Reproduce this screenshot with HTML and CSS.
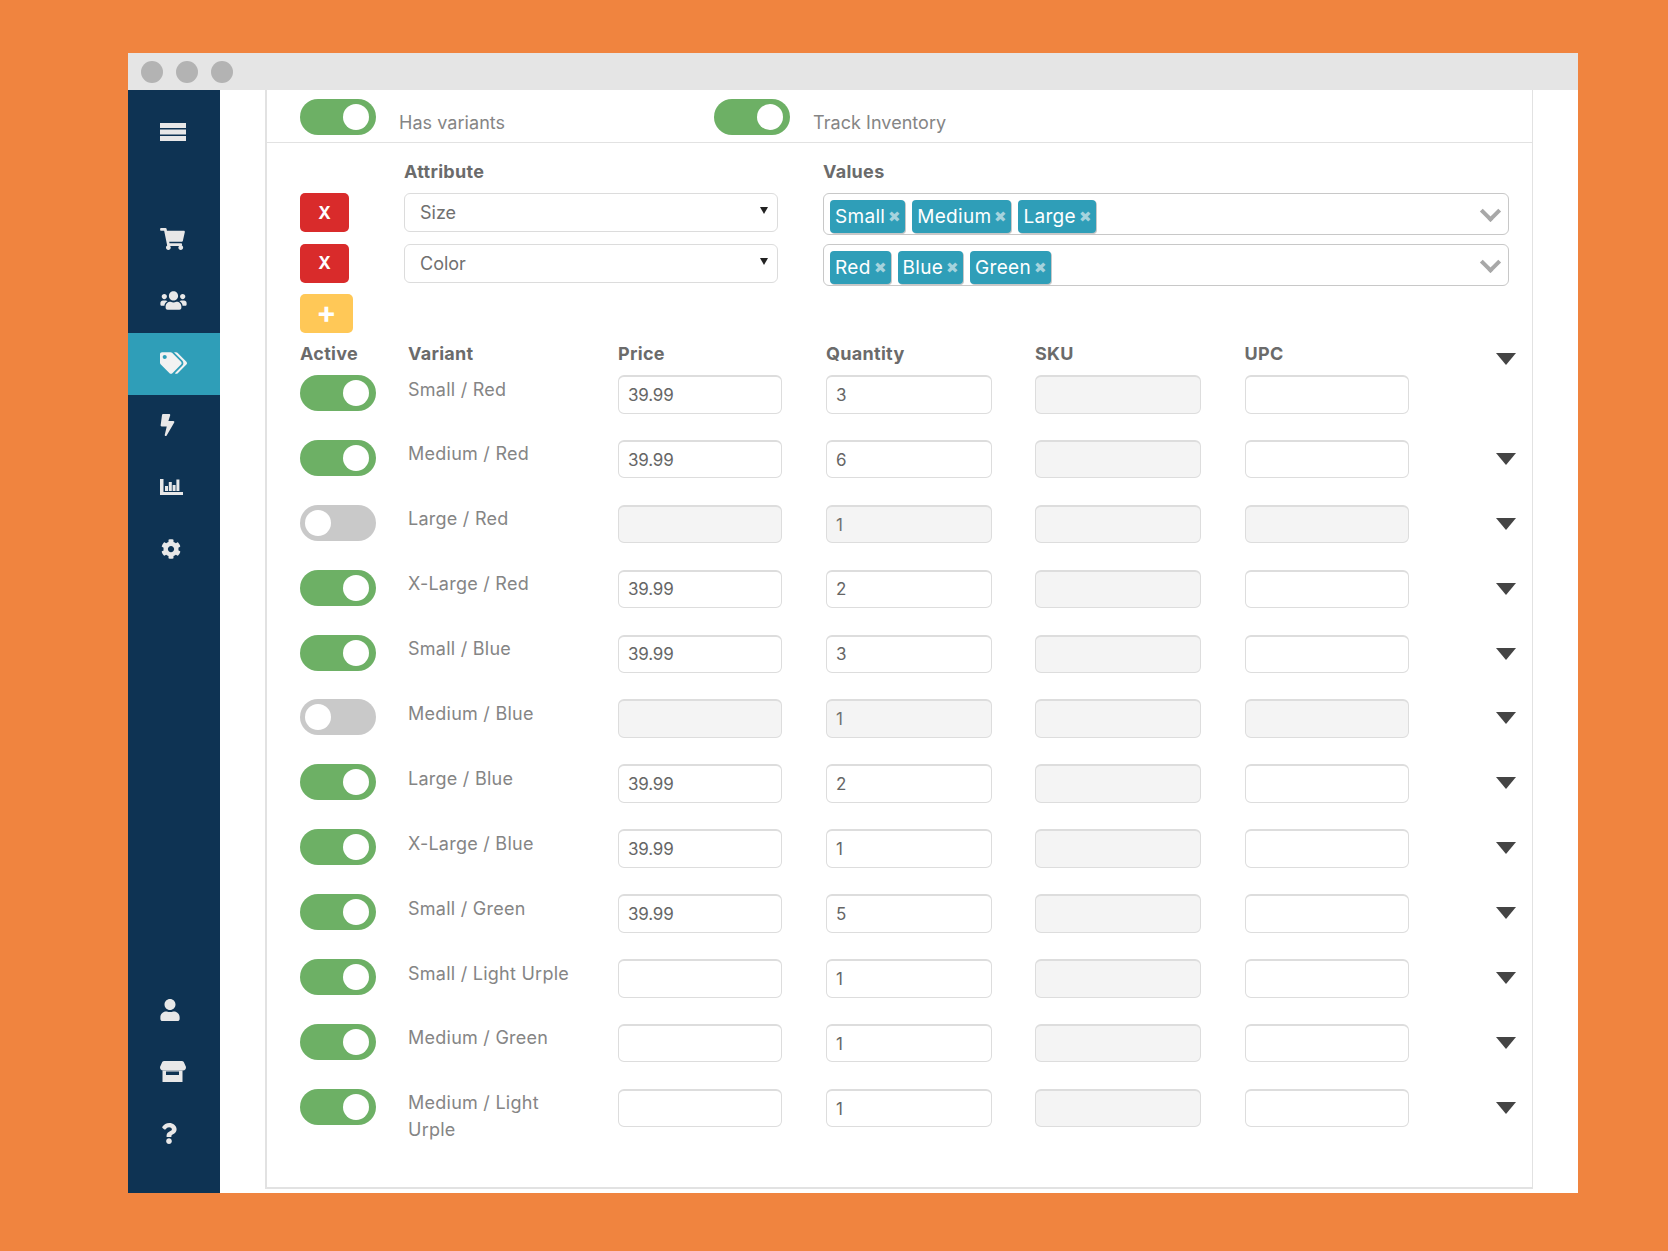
FILE: index.html
```html
<!DOCTYPE html>
<html lang="en">
<head>
<meta charset="utf-8">
<title>Product variants</title>
<link rel="stylesheet" href="styles.css">
</head>
<body>
<div class="window">
  <div class="titlebar"><i class="dot"></i><i class="dot"></i><i class="dot"></i></div>
  <div class="app">
    <nav class="sidebar">
      <div class="nav-item nav-menu"><svg class="icon i-menu" viewBox="0 0 26 18"><rect width="26" height="5"/><rect y="6.500" width="26" height="5"/><rect y="13" width="26" height="5"/></svg></div>
      <div class="nav-item nav-first"><svg class="icon i-cart" viewBox="0 0 576 512"><path d="M528.12 301.319l47.273-208C578.806 78.301 567.391 64 551.99 64H159.208l-9.166-44.81C147.758 8.021 137.93 0 126.529 0H24C10.745 0 0 10.745 0 24v16c0 13.255 10.745 24 24 24h69.883l70.248 343.435C147.325 417.1 136 435.222 136 456c0 30.928 25.072 56 56 56s56-25.072 56-56c0-15.674-6.447-29.835-16.824-40h209.647C430.447 426.165 424 440.326 424 456c0 30.928 25.072 56 56 56s56-25.072 56-56c0-22.172-12.888-41.332-31.579-50.405l5.517-24.276c3.413-15.018-8.002-29.319-23.403-29.319H218.117l-6.545-32h293.145c11.206 0 20.92-7.754 23.403-18.681z"/></svg></div>
      <div class="nav-item"><svg class="icon i-users" viewBox="0 0 640 512"><path d="M96 224c35.3 0 64-28.7 64-64s-28.7-64-64-64-64 28.7-64 64 28.7 64 64 64zm448 0c35.3 0 64-28.7 64-64s-28.7-64-64-64-64 28.7-64 64 28.7 64 64 64zm32 32h-64c-17.6 0-33.5 7.1-45.1 18.6 40.3 22.1 68.9 62 75.1 109.4h66c17.7 0 32-14.3 32-32v-32c0-35.3-28.7-64-64-64zm-256 0c61.9 0 112-50.1 112-112S381.9 32 320 32 208 82.1 208 144s50.1 112 112 112zm76.8 32h-8.3c-20.8 10-43.9 16-68.5 16s-47.6-6-68.5-16h-8.3C179.6 288 128 339.6 128 403.2V432c0 26.5 21.5 48 48 48h288c26.5 0 48-21.5 48-48v-28.8c0-63.6-51.6-115.2-115.2-115.2zm-223.7-13.4C161.5 263.1 145.6 256 128 256H64c-35.3 0-64 28.7-64 64v32c0 17.7 14.3 32 32 32h65.9c6.3-47.4 34.9-87.3 75.2-109.4z"/></svg></div>
      <div class="nav-item is-active"><svg class="icon i-tags" viewBox="0 0 640 512"><path d="M497.941 225.941L286.059 14.059A48 48 0 0 0 252.118 0H48C21.49 0 0 21.49 0 48v204.118a48 48 0 0 0 14.059 33.941l211.882 211.882c18.744 18.745 49.136 18.746 67.882 0l204.118-204.118c18.745-18.745 18.745-49.137 0-67.882zM112 160c-26.51 0-48-21.49-48-48s21.49-48 48-48 48 21.49 48 48-21.49 48-48 48zm513.941 133.823L421.823 497.941c-18.745 18.745-49.137 18.745-67.882 0l-.36-.36L527.64 323.522c16.999-16.999 26.36-39.6 26.36-63.64s-9.362-46.641-26.36-63.64L331.397 0h48.721a48 48 0 0 1 33.941 14.059l211.882 211.882c18.745 18.745 18.745 49.137 0 67.882z"/></svg></div>
      <div class="nav-item"><svg class="icon i-bolt" viewBox="0 0 320 512"><path d="M296 160H180.6l42.6-129.8C227.2 15 215.7 0 200 0H56C44 0 33.8 8.9 32.2 20.8l-32 240C-1.7 275.2 9.5 288 24 288h118.7L96.6 482.5c-3.6 15.2 8 29.5 23.3 29.5 8.4 0 16.4-4.4 20.8-12l176-304c9.3-15.9-2.2-36-20.7-36z"/></svg></div>
      <div class="nav-item"><svg class="icon i-chart" viewBox="0 0 23 16"><path d="M0 0h3.500v13H23v3H0z"/><rect x="5" y="7" width="3" height="5"/><rect x="8.800" y="3" width="3" height="9"/><rect x="12.600" y="6" width="3" height="6"/><rect x="16.400" y="0.500" width="3" height="11.500"/></svg></div>
      <div class="nav-item"><svg class="icon i-cog" viewBox="0 0 512 512"><path d="M487.4 315.7l-42.6-24.6c4.3-23.2 4.3-47 0-70.2l42.6-24.6c4.9-2.8 7.1-8.6 5.5-14-11.1-35.6-30-67.8-54.7-94.6-3.8-4.1-10-5.1-14.8-2.3L380.8 110c-17.9-15.4-38.5-27.3-60.8-35.1V25.8c0-5.6-3.9-10.5-9.4-11.7-36.7-8.2-74.3-7.8-109.2 0-5.5 1.2-9.4 6.1-9.4 11.7V75c-22.2 7.9-42.8 19.8-60.8 35.1L88.7 85.5c-4.9-2.8-11-1.9-14.8 2.3-24.7 26.7-43.6 58.9-54.7 94.6-1.7 5.4.6 11.2 5.5 14L67.3 221c-4.3 23.2-4.3 47 0 70.2l-42.6 24.6c-4.9 2.8-7.1 8.6-5.5 14 11.1 35.6 30 67.8 54.7 94.6 3.8 4.1 10 5.1 14.8 2.3l42.6-24.6c17.9 15.4 38.5 27.3 60.8 35.1v49.2c0 5.6 3.9 10.5 9.4 11.7 36.7 8.2 74.3 7.8 109.2 0 5.5-1.2 9.4-6.1 9.4-11.7v-49.2c22.2-7.9 42.8-19.8 60.8-35.1l42.6 24.6c4.9 2.8 11 1.9 14.8-2.3 24.7-26.7 43.6-58.9 54.7-94.6 1.5-5.5-.7-11.3-5.6-14.1zM256 336c-44.1 0-80-35.9-80-80s35.9-80 80-80 80 35.9 80 80-35.9 80-80 80z"/></svg></div>
      <div class="nav-spacer"></div>
      <div class="nav-item"><svg class="icon i-user" viewBox="0 0 448 512"><path d="M224 256c70.7 0 128-57.3 128-128S294.7 0 224 0 96 57.3 96 128s57.3 128 128 128zm89.6 32h-16.7c-22.2 10.2-46.9 16-72.9 16s-50.6-5.800-72.9-16h-16.700C60.200 288 0 348.200 0 422.400V464c0 26.500 21.500 48 48 48h352c26.500 0 48-21.500 48-48v-41.600c0-74.200-60.200-134.400-134.400-134.400z"/></svg></div>
      <div class="nav-item"><svg class="icon i-store" viewBox="0 0 26 21"><path d="M4 0h18c1 0 1.800.800 2 1.500L26 6c0 2-1 3.500-3 3.500H3C1 9.500 0 8 0 6l2-4.500C2.200.800 3 0 4 0z"/><path fill-rule="evenodd" d="M2.500 9.500h20V21h-20zM6 10.500V14h13v-3.500z"/></svg></div>
      <div class="nav-item"><svg class="icon i-help" viewBox="0 0 384 512"><path d="M202.021 0C122.202 0 70.503 32.703 29.914 91.026c-7.363 10.58-5.093 25.086 5.178 32.874l43.138 32.709c10.373 7.865 25.132 6.026 33.253-4.148 25.049-31.381 43.63-49.449 82.757-49.449 30.764 0 68.816 19.799 68.816 49.631 0 22.552-18.617 34.134-48.993 51.164-35.423 19.86-82.299 44.576-82.299 106.405V320c0 13.255 10.745 24 24 24h72.471c13.255 0 24-10.745 24-24v-5.773c0-42.86 125.268-44.645 125.268-160.627C377.504 66.256 286.902 0 202.021 0zM192 373.459c-38.196 0-69.271 31.075-69.271 69.271 0 38.195 31.075 69.27 69.271 69.27s69.271-31.075 69.271-69.271-31.075-69.27-69.271-69.27z"/></svg></div>
    </nav>
    <main class="main">
      <section class="panel">
        <header class="panel-head">
          <div class="head-item"><span class="toggle on"></span><span class="head-label">Has variants</span></div>
          <div class="head-item"><span class="toggle on"></span><span class="head-label">Track Inventory</span></div>
        </header>
        <div class="attrs">
          <span></span><span class="col-title">Attribute</span><span class="col-title col-values">Values</span>
          <button class="btn btn-del">X</button>
          <div class="select">Size</div>
          <div class="multi"><span class="tag">Small<b>✖</b></span><span class="tag">Medium<b>✖</b></span><span class="tag">Large<b>✖</b></span><i class="chev"></i></div>
          <button class="btn btn-del">X</button>
          <div class="select">Color</div>
          <div class="multi"><span class="tag">Red<b>✖</b></span><span class="tag">Blue<b>✖</b></span><span class="tag">Green<b>✖</b></span><i class="chev"></i></div>
          <button class="btn btn-add">+</button>
        </div>
        <div class="variants">
          <span class="col-title">Active</span><span class="col-title">Variant</span><span class="col-title">Price</span><span class="col-title">Quantity</span><span class="col-title">SKU</span><span class="col-title">UPC</span><i class="caret"></i>

          <span class="toggle on"></span><span class="vname">Small / Red</span><input class="field" value="39.99"><input class="field" value="3"><input class="field" disabled><input class="field"><span></span>
          <span class="toggle on"></span><span class="vname">Medium / Red</span><input class="field" value="39.99"><input class="field" value="6"><input class="field" disabled><input class="field"><i class="caret"></i>
          <span class="toggle"></span><span class="vname">Large / Red</span><input class="field" disabled><input class="field" value="1" disabled><input class="field" disabled><input class="field" disabled><i class="caret"></i>
          <span class="toggle on"></span><span class="vname">X-Large / Red</span><input class="field" value="39.99"><input class="field" value="2"><input class="field" disabled><input class="field"><i class="caret"></i>
          <span class="toggle on"></span><span class="vname">Small / Blue</span><input class="field" value="39.99"><input class="field" value="3"><input class="field" disabled><input class="field"><i class="caret"></i>
          <span class="toggle"></span><span class="vname">Medium / Blue</span><input class="field" disabled><input class="field" value="1" disabled><input class="field" disabled><input class="field" disabled><i class="caret"></i>
          <span class="toggle on"></span><span class="vname">Large / Blue</span><input class="field" value="39.99"><input class="field" value="2"><input class="field" disabled><input class="field"><i class="caret"></i>
          <span class="toggle on"></span><span class="vname">X-Large / Blue</span><input class="field" value="39.99"><input class="field" value="1"><input class="field" disabled><input class="field"><i class="caret"></i>
          <span class="toggle on"></span><span class="vname">Small / Green</span><input class="field" value="39.99"><input class="field" value="5"><input class="field" disabled><input class="field"><i class="caret"></i>
          <span class="toggle on"></span><span class="vname">Small / Light Urple</span><input class="field"><input class="field" value="1"><input class="field" disabled><input class="field"><i class="caret"></i>
          <span class="toggle on"></span><span class="vname">Medium / Green</span><input class="field"><input class="field" value="1"><input class="field" disabled><input class="field"><i class="caret"></i>
          <span class="toggle on"></span><span class="vname">Medium / Light Urple</span><input class="field"><input class="field" value="1"><input class="field" disabled><input class="field"><i class="caret"></i>
        </div>
      </section>
    </main>
  </div>
</div>
</body>
</html>
```
FILE: styles.css
```css
* { box-sizing: border-box; }
html, body { margin: 0; height: 100%; }
body {
  background: #f0843f;
  font-family: Inter, "Open Sans", sans-serif;
  font-size: 18px;
  color: #858585;
  overflow: hidden;
}
.window {
  width: 1450px;
  height: 1140px;
  margin: 53px 0 0 128px;
  background: #fff;
  display: flex;
  flex-direction: column;
}
.titlebar {
  height: 37px;
  background: #e5e5e5;
  display: flex;
  align-items: center;
  gap: 13px;
  padding-left: 13px;
  flex: none;
}
.dot { width: 22px; height: 22px; border-radius: 50%; background: #b3b3b3; }
.app { flex: 1; display: flex; min-height: 0; }

.sidebar {
  width: 92px;
  flex: none;
  background: #0e3353;
  display: flex;
  flex-direction: column;
  padding: 11px 0 27px;
}
.nav-item {
  height: 62px;
  flex: none;
  display: flex;
  align-items: center;
  padding: 0 0 3px 32px;
}
.nav-menu { padding-bottom: 0; }
.nav-first { margin-top: 46px; }
.nav-spacer { flex: 1; }
.is-active { background: #2f9eb8; }
.icon { fill: #e8e8e8; display: block; }
.i-menu { width: 26px; height: 18px; }
.i-cart { width: 25px; height: 22px; }
.i-users { width: 27px; height: 21px; }
.i-tags { width: 27px; height: 22px; fill: #f2f2f2; }
.i-bolt { width: 15px; height: 22px; }
.i-chart { width: 23px; height: 16px; }
.i-cog { width: 20px; height: 20px; margin-left: 1px; }
.i-user { width: 20px; height: 22px; }
.i-store { width: 26px; height: 21px; }
.i-help { width: 16px; height: 21px; margin-left: 1px; }

.main { flex: 1; padding: 0 45px 4px; min-width: 0; }
.panel {
  height: 100%;
  border: solid #e2e2e2;
  border-width: 0 1px 2px 2px;
  padding: 0 0 0 33px;
}
.panel-head {
  height: 53px;
  margin-left: -33px;
  padding: 9px 0 0 33px;
  border-bottom: 1.500px solid #e2e2e2;
  display: flex;
}
.head-item { width: 414px; display: flex; gap: 23px; }
.head-label { line-height: 27px; padding-top: 10px; letter-spacing: .05px; }

.toggle {
  position: relative;
  display: block;
  width: 76px;
  height: 36px;
  border-radius: 18px;
  background: #c9c9c9;
}
.toggle::after {
  content: "";
  position: absolute;
  top: 5px;
  left: 5px;
  width: 26px;
  height: 26px;
  border-radius: 50%;
  background: #fff;
}
.toggle.on { background: #6db065; }
.toggle.on::after { left: 43px; }

.col-title { font-weight: 700; color: #6b6b6b; line-height: 28px; letter-spacing: .3px; }

.attrs {
  display: grid;
  grid-template-columns: 104px 374px 731px;
  grid-template-rows: 24px 39px 39px 39px;
  row-gap: 11.500px;
  padding-top: 14.500px;
  height: 197px;
}
.col-values { margin-left: 45px; }
.btn {
  border: 0;
  border-radius: 5px;
  color: #fff;
  font-family: inherit;
  font-weight: 700;
  height: 39px;
  padding: 0;
}
.btn-del { width: 49px; background: #d92b2b; font-size: 17px; }
.btn-add { width: 53px; background: #ffc857; font-size: 30px; grid-column: 1; line-height: 1; padding-bottom: 3px; }
.select {
  position: relative;
  height: 39px;
  border: 1.500px solid #dcdcdc;
  border-radius: 6px;
  line-height: 37px;
  padding-left: 15px;
  color: #707070;
}
.select::after {
  content: "";
  position: absolute;
  right: 9px;
  top: 13px;
  border: solid transparent;
  border-width: 7px 4px 0;
  border-top-color: #222;
}
.multi {
  position: relative;
  margin-left: 45px;
  height: 42px;
  border: 1.500px solid #c8c8c8;
  border-radius: 6px;
  display: flex;
  gap: 7px;
  padding: 6px 0 0 6px;
}
.tag {
  height: 33px;
  background: #2f9eb8;
  border-radius: 4px;
  box-shadow: 1px 1px 0 #c8c8c8;
  color: #fff;
  font-size: 19px;
  letter-spacing: .3px;
  line-height: 33px;
  padding: 0 4px 0 5px;
  display: flex;
  gap: 3px;
  white-space: nowrap;
}
.tag b { font-size: 15px; letter-spacing: 0; color: #a5d3dd; font-weight: 400; }
.chev {
  position: absolute;
  right: 10px;
  top: 14px;
  width: 15px;
  height: 15px;
  border: solid #a8a8a8;
  border-width: 0 4px 4px 0;
  transform: translateY(-4px) rotate(45deg);
}

.variants {
  display: grid;
  grid-template-columns: 108px 210px 208px 209px 209.500px 251.500px 21px;
  grid-template-rows: 35px repeat(12, 64.900px);
  align-items: start;
}
.vname { line-height: 27px; width: 170px; letter-spacing: .25px; padding-top: .5px; }
.field {
  width: 164.500px;
  height: 38.500px;
  border: 1.500px solid #dddddd;
  border-top-width: 2px;
  border-radius: 6px;
  background: #fff;
  font: inherit;
  font-size: 17px;
  letter-spacing: -.2px;
  color: #666;
  padding: 0 9px;
  outline: 0;
}
.field:nth-child(7n+3) { width: 164px; }
.field:nth-child(7n+4), .field:nth-child(7n+5) { width: 166px; }
.field:disabled { background: #f4f4f4; color: #707070; }
.caret {
  display: block;
  width: 0;
  height: 0;
  margin-top: 13px;
  border: solid transparent;
  border-width: 12px 10.500px 0;
  border-top-color: #444;
}
```
